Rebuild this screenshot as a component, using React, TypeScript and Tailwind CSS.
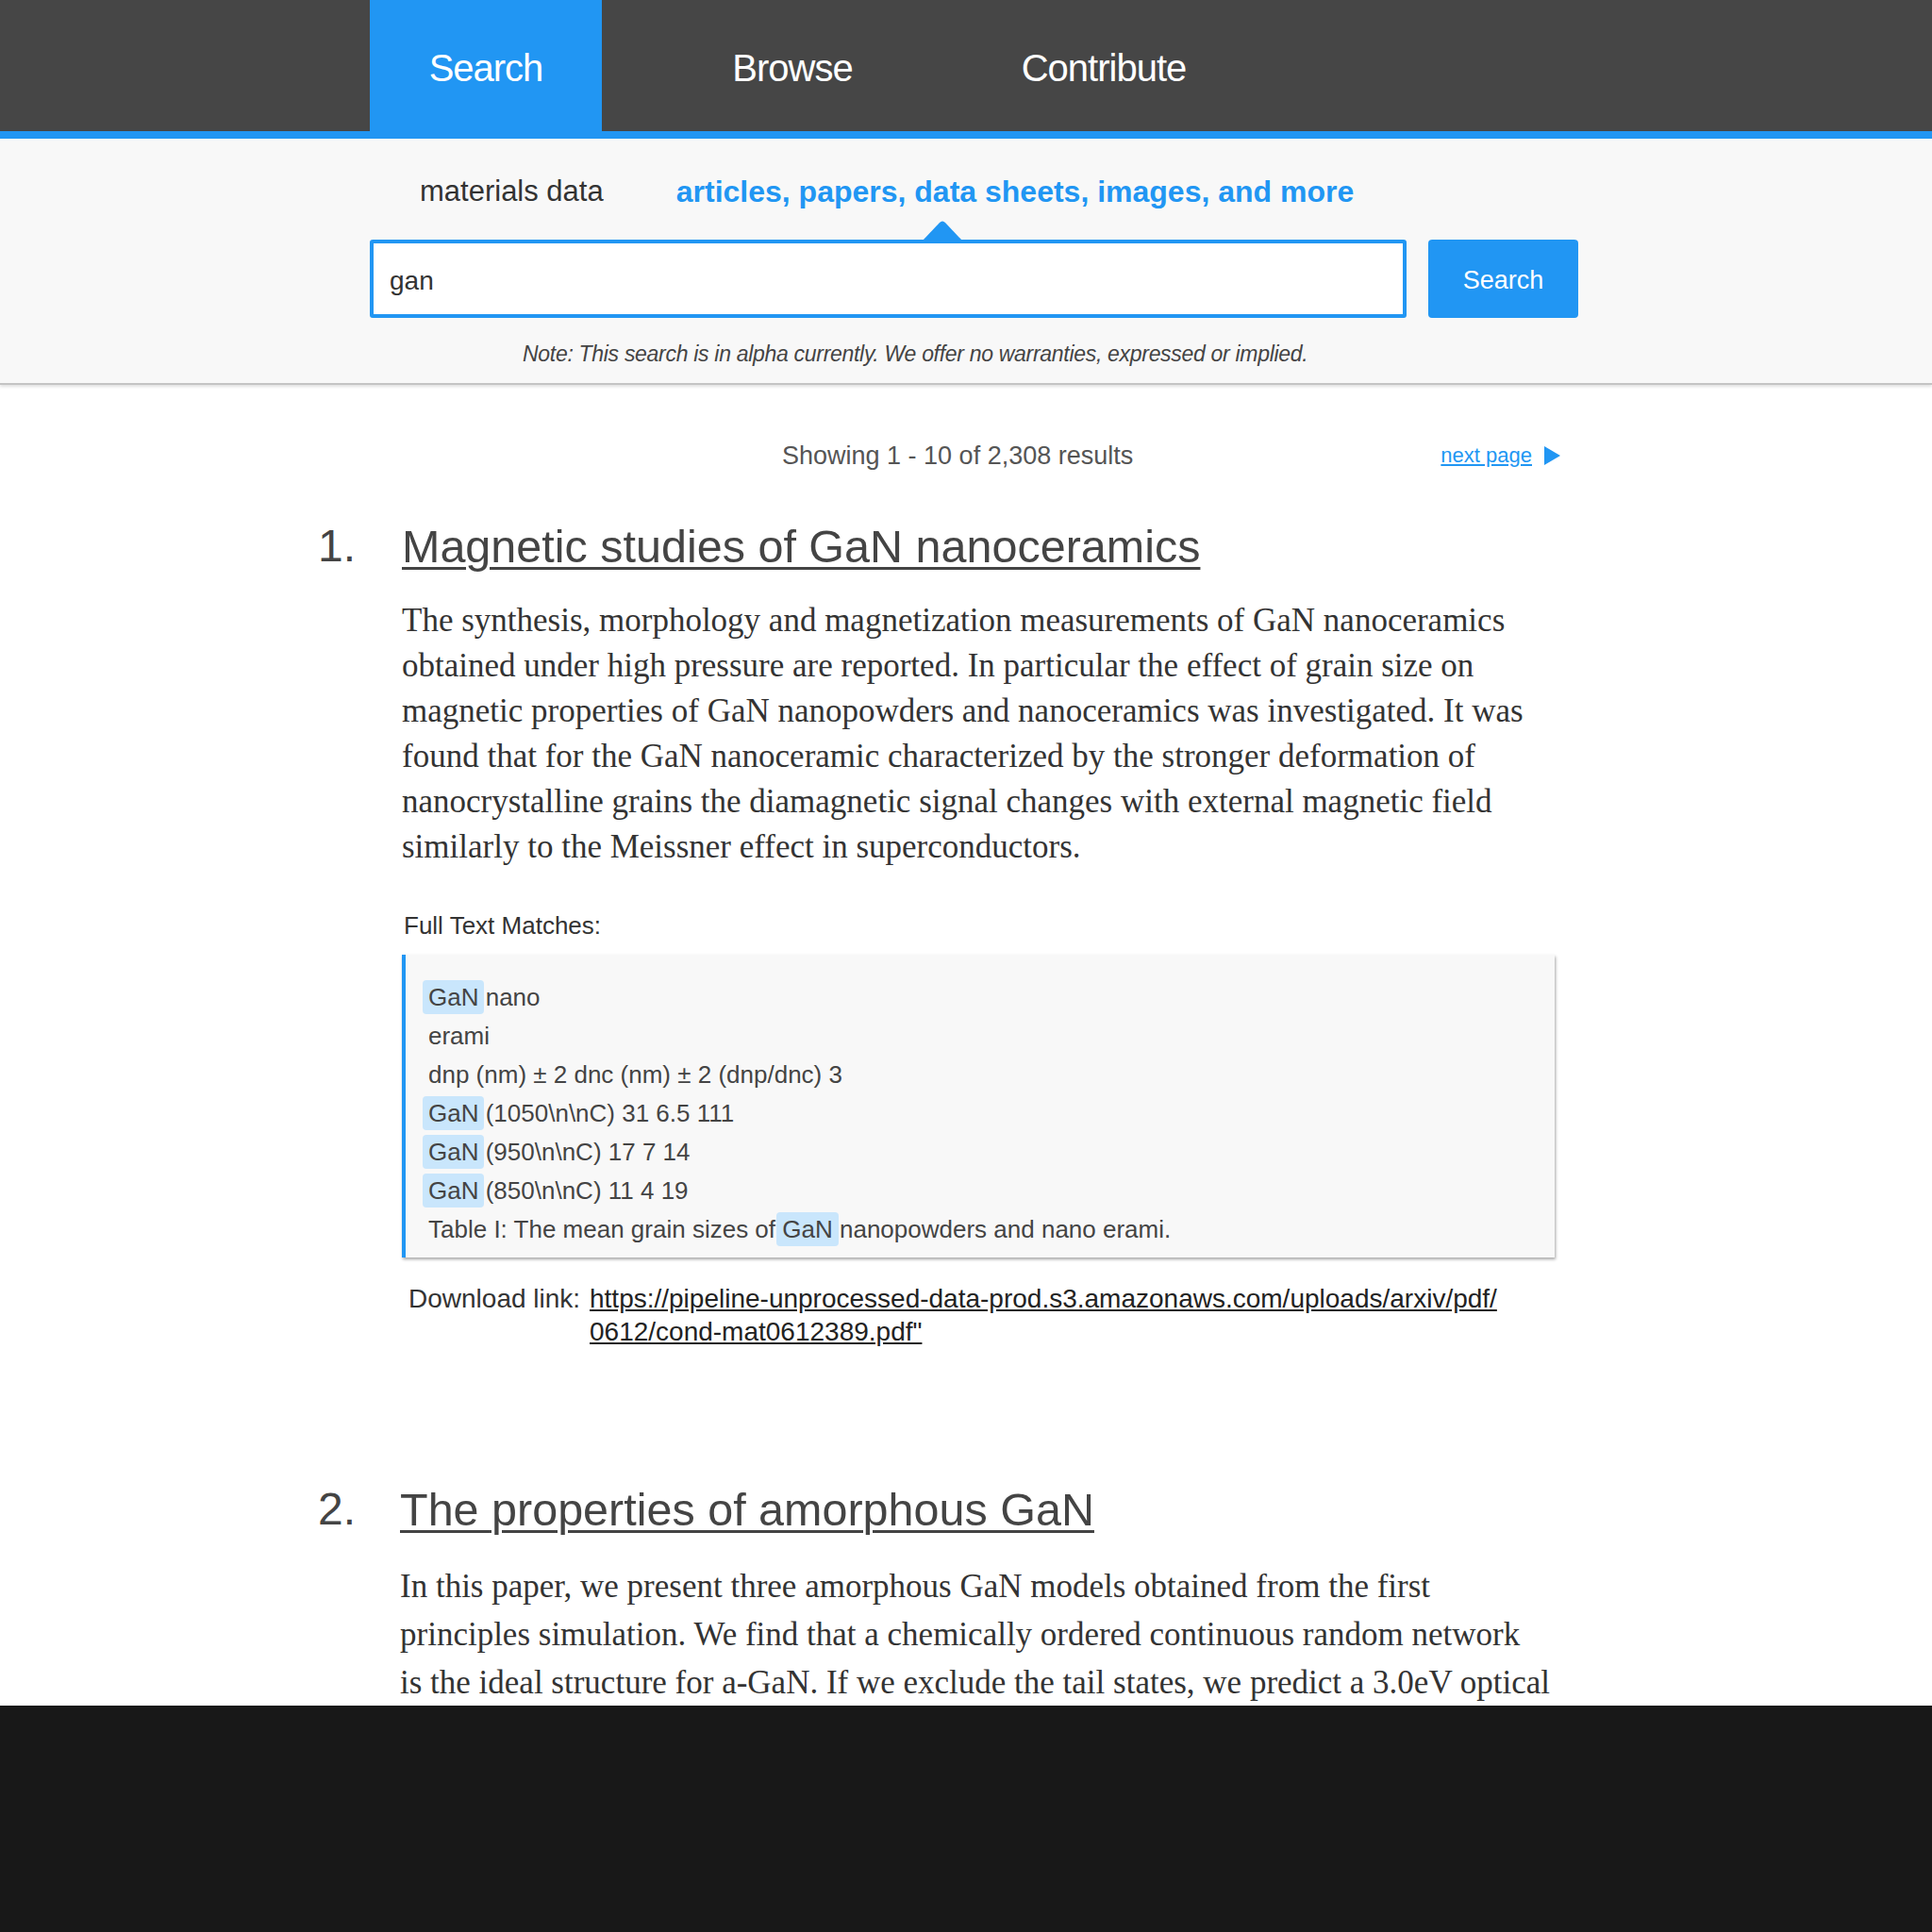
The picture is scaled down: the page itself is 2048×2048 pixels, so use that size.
import React from "react";

// Resultados de búsqueda: datos de ejemplo
type MatchLine = { hit?: string; text: string };

const matches: MatchLine[] = [
  { hit: "GaN", text: "nano" },
  { text: "erami" },
  { text: "dnp (nm) ± 2 dnc (nm) ± 2 (dnp/dnc) 3" },
  { hit: "GaN", text: "(1050\\n\\nC) 31 6.5 111" },
  { hit: "GaN", text: "(950\\n\\nC) 17 7 14" },
  { hit: "GaN", text: "(850\\n\\nC) 11 4 19" },
];

function Hit({ children }: { children: React.ReactNode }) {
  return (
    <span className="-mx-[6px] rounded-[4px] bg-[#c9e6fc] px-[6px] py-[3px]">
      {children}
    </span>
  );
}

export default function App() {
  return (
    <div className="min-h-[2048px] bg-[#181818]">
      <div className="h-[1808px] overflow-hidden bg-white font-['Liberation_Sans',Arial,sans-serif]">
        {/* Barra de navegación */}
        <nav className="h-[147px] border-b-8 border-[#2196f3] bg-[#464646]">
          <div className="ml-[392px] flex h-full text-[40px] tracking-[-1px] text-white">
            <a className="flex w-[246px] items-center justify-center bg-[#2196f3] pt-[4px]">Search</a>
            <a className="ml-[102px] flex w-[200px] items-center justify-center pt-[4px]">Browse</a>
            <a className="ml-[110px] flex w-[240px] items-center justify-center pt-[4px]">Contribute</a>
          </div>
        </nav>

        {/* Buscador */}
        <section className="border-b-2 border-[#c4c4c4] bg-[#f8f8f8] pb-[16px] pt-[36px] shadow-[0_2px_3px_rgba(0,0,0,0.12)]">
          <div className="ml-[392px] w-[1281px]">
            <div className="flex h-[40px] items-center text-[31px] leading-[40px]">
              <span className="ml-[53px] text-[#333]">materials data</span>
              <span className="ml-[77px] font-bold text-[32px] text-[#2196f3]">
                articles, papers, data sheets, images, and more
              </span>
            </div>
            <div className="relative mt-[31px] flex h-[83px] gap-[23px]">
              <svg
                className="absolute left-[586px] top-[-21px]"
                width="42"
                height="22"
                viewBox="0 0 42 22"
              >
                <path d="M0 22 L18 3 Q21 0 24 3 L42 22 Z" fill="#2196f3" />
              </svg>
              <div className="flex flex-1 items-center rounded-[3px] border-4 border-[#2196f3] bg-white pl-[17px] pt-[5px] text-[28px] text-[#333]">
                gan
              </div>
              <button className="w-[159px] rounded-[4px] bg-[#2196f3] pt-[3px] text-[27px] text-white">Search</button>
            </div>
            <p className="mt-[23px] pl-[162px] text-[23px] italic leading-[30px] tracking-[-0.3px] text-[#444]">
              Note: This search is in alpha currently. We offer no warranties, expressed or implied.
            </p>
          </div>
        </section>

        {/* Resultados */}
        <div className="ml-[392px] mt-[59px] flex w-[1281px] items-center leading-[32px]">
          <span className="ml-[437px] text-[27px] text-[#555]">Showing 1 - 10 of 2,308 results</span>
          <a className="ml-auto text-[22px] text-[#2196f3] underline">next page</a>
          <svg className="ml-[13px] mr-[19px]" width="17" height="20" viewBox="0 0 17 20">
            <path d="M0 0 L17 10 L0 20 Z" fill="#2196f3" />
          </svg>
        </div>

        <ol className="ml-[337px] w-[1330px]">
          <li className="mt-[51px] flex">
            <span className="w-[89px] text-[48px] leading-[58px] text-[#444]">1.</span>
            <div className="w-[1222px]">
              <a className="text-[48.5px] leading-[58px] text-[#444] underline decoration-[3px] underline-offset-[5px]">
                Magnetic studies of GaN nanoceramics
              </a>
              <p className="mt-[26px] pr-[10px] font-['Liberation_Serif',serif] text-[35px] leading-[48px] text-[#333]">
                The synthesis, morphology and magnetization measurements of GaN nanoceramics obtained under
                high pressure are reported. In particular the effect of grain size on magnetic properties of
                GaN nanopowders and nanoceramics was investigated. It was found that for the GaN nanoceramic
                characterized by the stronger deformation of nanocrystalline grains the diamagnetic signal
                changes with external magnetic field similarly to the Meissner effect in superconductors.
              </p>
              <p className="ml-[2px] mt-[43px] text-[26px] leading-[32px] text-[#333]">Full Text Matches:</p>
              <div className="mt-[15px] border-l-4 border-[#2196f3] bg-[#f8f8f8] pb-[9px] pl-[24px] pt-[25px] text-[26px] leading-[41px] text-[#444] shadow-[1px_2px_3px_rgba(0,0,0,0.35)]">
                {matches.map((m, i) => (
                  <div key={i}>
                    {m.hit && <Hit>{m.hit}</Hit>} {m.text}
                  </div>
                ))}
                <div>
                  Table I: The mean grain sizes of <Hit>GaN</Hit> nanopowders and nano erami.
                </div>
              </div>
              <div className="mt-[26px] flex pl-[7px] text-[28px] leading-[35px]">
                <span className="w-[192px] shrink-0 text-[#333]">Download link:</span>
                <a className="text-[#222] underline">
                  https://pipeline-unprocessed-data-prod.s3.amazonaws.com/uploads/arxiv/pdf/<wbr />
                  0612/cond-mat0612389.pdf"
                </a>
              </div>
            </div>
          </li>

          <li className="mt-[142px] flex">
            <span className="w-[87px] text-[48px] leading-[58px] text-[#444]">2.</span>
            <div className="w-[1228px]">
              <a className="text-[48.5px] leading-[58px] text-[#444] underline decoration-[3px] underline-offset-[5px]">
                The properties of amorphous GaN
              </a>
              <p className="mt-[27px] font-['Liberation_Serif',serif] text-[35px] leading-[51px] text-[#333]">
                In this paper, we present three amorphous GaN models obtained from the first principles
                simulation. We find that a chemically ordered continuous random network
                <br />
                is the ideal structure for a-GaN. If we exclude the tail states, we predict a 3.0eV optical gap
                for an ideal a-GaN network.
              </p>
            </div>
          </li>
        </ol>
      </div>
    </div>
  );
}
